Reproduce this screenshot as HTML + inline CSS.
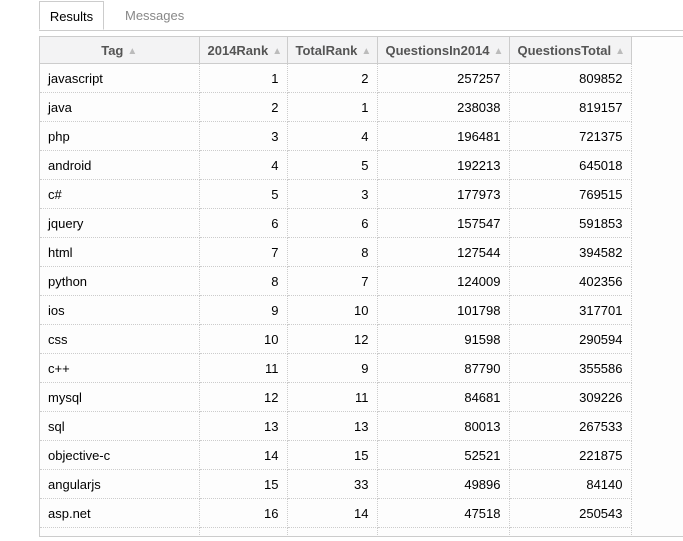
<!DOCTYPE html>
<html><head><style>
body{margin:0;width:683px;height:541px;background:#fff;font-family:"Liberation Sans",sans-serif;font-size:13px;color:#000;position:relative;overflow:hidden}
.tabline{position:absolute;left:39px;top:30px;width:644px;border-top:1px solid #ccc}
.tab{position:absolute;left:39px;top:1px;width:65px;height:29px;border:1px solid #ccc;border-bottom:1px solid #fff;background:#fff;box-sizing:border-box;text-align:center;line-height:29px;z-index:2}
.tab2{position:absolute;left:125px;top:1px;line-height:29px;color:#888}
.wrap{position:absolute;left:39px;top:36px;width:644px;height:501px;border-left:1px solid #ccc;border-top:1px solid #ccc;border-bottom:1px solid #ccc;box-sizing:border-box;overflow:hidden;background:#fdfdfd}
table{border-collapse:collapse;table-layout:fixed;width:591px}
th{height:26px;background:#f3f3f4;color:#555;font-weight:bold;border-right:1px solid #ccc;border-bottom:1px solid #ccc;padding:0 8px;white-space:nowrap}
th span{color:#bbb;font-size:10px;vertical-align:1px;margin-left:4px}
td{height:28px;border-right:1px dotted #ccc;border-bottom:1px dotted #ccc;padding:0 8px;text-align:right}
td:first-child{text-align:left}
</style></head><body>
<div class="tabline"></div>
<div class="tab">Results</div>
<div class="tab2">Messages</div>
<div class="wrap"><table>
<colgroup><col style="width:159px"><col style="width:88px"><col style="width:90px"><col style="width:132px"><col style="width:122px"></colgroup>
<tr><th>Tag<span>▲</span></th><th>2014Rank<span>▲</span></th><th>TotalRank<span>▲</span></th><th>QuestionsIn2014<span>▲</span></th><th>QuestionsTotal<span>▲</span></th></tr>
<tr><td>javascript</td><td>1</td><td>2</td><td>257257</td><td>809852</td></tr>
<tr><td>java</td><td>2</td><td>1</td><td>238038</td><td>819157</td></tr>
<tr><td>php</td><td>3</td><td>4</td><td>196481</td><td>721375</td></tr>
<tr><td>android</td><td>4</td><td>5</td><td>192213</td><td>645018</td></tr>
<tr><td>c#</td><td>5</td><td>3</td><td>177973</td><td>769515</td></tr>
<tr><td>jquery</td><td>6</td><td>6</td><td>157547</td><td>591853</td></tr>
<tr><td>html</td><td>7</td><td>8</td><td>127544</td><td>394582</td></tr>
<tr><td>python</td><td>8</td><td>7</td><td>124009</td><td>402356</td></tr>
<tr><td>ios</td><td>9</td><td>10</td><td>101798</td><td>317701</td></tr>
<tr><td>css</td><td>10</td><td>12</td><td>91598</td><td>290594</td></tr>
<tr><td>c++</td><td>11</td><td>9</td><td>87790</td><td>355586</td></tr>
<tr><td>mysql</td><td>12</td><td>11</td><td>84681</td><td>309226</td></tr>
<tr><td>sql</td><td>13</td><td>13</td><td>80013</td><td>267533</td></tr>
<tr><td>objective-c</td><td>14</td><td>15</td><td>52521</td><td>221875</td></tr>
<tr><td>angularjs</td><td>15</td><td>33</td><td>49896</td><td>84140</td></tr>
<tr><td>asp.net</td><td>16</td><td>14</td><td>47518</td><td>250543</td></tr>
<tr><td>&nbsp;</td><td></td><td></td><td></td><td></td></tr>
</table></div>
</body></html>
